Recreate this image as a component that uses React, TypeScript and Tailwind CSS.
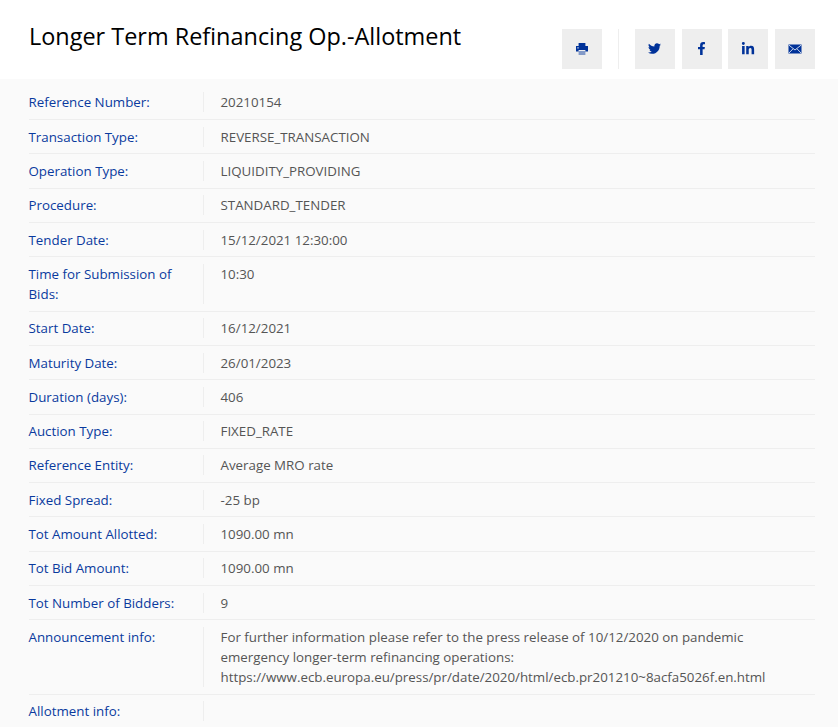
import React from "react";
import { FaTwitter, FaFacebookF, FaLinkedinIn } from "react-icons/fa";

const ROWS: [string, React.ReactNode][] = [
  ["Reference Number:", "20210154"],
  ["Transaction Type:", "REVERSE_TRANSACTION"],
  ["Operation Type:", "LIQUIDITY_PROVIDING"],
  ["Procedure:", "STANDARD_TENDER"],
  ["Tender Date:", "15/12/2021 12:30:00"],
  ["Time for Submission of Bids:", "10:30"],
  ["Start Date:", "16/12/2021"],
  ["Maturity Date:", "26/01/2023"],
  ["Duration (days):", "406"],
  ["Auction Type:", "FIXED_RATE"],
  ["Reference Entity:", "Average MRO rate"],
  ["Fixed Spread:", "-25 bp"],
  ["Tot Amount Allotted:", "1090.00 mn"],
  ["Tot Bid Amount:", "1090.00 mn"],
  ["Tot Number of Bidders:", "9"],
  [
    "Announcement info:",
    <>
      For further information please refer to the press release of 10/12/2020 on pandemic
      <br />
      emergency longer-term refinancing operations:
      <br />
      https://www.ecb.europa.eu/press/pr/date/2020/html/ecb.pr201210~8acfa5026f.en.html
    </>,
  ],
  ["Allotment info:", ""],
];

const IconButton = ({ children }: { children: React.ReactNode }) => (
  <div className="w-10 h-10 bg-[#eeeeee] flex items-center justify-center text-[#003299]">
    {children}
  </div>
);

const PrintIcon = () => (
  <svg width="14" height="14" viewBox="0 0 14 14" fill="currentColor">
    <rect x="3.6" y="1" width="6.8" height="3" />
    <path d="M1 4h12v5.5h-2.6V8H3.6v1.5H1z" />
    <rect x="2.2" y="5.4" width="1.6" height="1" fill="#dfe6f3" />
    <rect x="3.6" y="9" width="6.8" height="4" opacity="0.45" />
  </svg>
);

const MailIcon = () => (
  <svg width="14" height="10" viewBox="0 0 14 10">
    <rect x="0.5" y="0.5" width="13" height="9" fill="currentColor" />
    <path d="M1 1.2 7 6l6-4.8M1 9l4-4.2M13 9 9 4.8" fill="none" stroke="#dfe6f3" strokeWidth="0.9" />
  </svg>
);

const App = () => {
  return (
    <div className="w-[838px] h-[727px] overflow-hidden bg-white font-['Open_Sans',sans-serif] text-[13.33px] leading-[20px] antialiased">
      <div className="h-[79px] flex items-start justify-between pl-[29px] pr-[23px]">
        <h1 className="text-[23.44px] leading-[32px] mt-[20px] text-black">
          Longer Term Refinancing Op.-Allotment
        </h1>
        <div className="flex mt-[29px]">
          <IconButton>
            <PrintIcon />
          </IconButton>
          <div className="w-px h-10 bg-[#eeeeee] mx-4" />
          <div className="flex gap-[6.67px]">
            <IconButton>
              <FaTwitter size={13} className="-mt-px -ml-px" />
            </IconButton>
            <IconButton>
              <FaFacebookF size={13} className="-mt-px" />
            </IconButton>
            <IconButton>
              <FaLinkedinIn size={14} className="-mt-px" />
            </IconButton>
            <IconButton>
              <MailIcon />
            </IconButton>
          </div>
        </div>
      </div>
      <div className="h-[648px] bg-[#fafafa] pl-[28.5px] pr-[23px] pt-[6.7px]">
        {ROWS.map(([label, value], i) => (
          <div
            key={i}
            className="flex py-[6.66px] border-b border-[#eeeeee] last:border-b-0"
          >
            <div className="w-[175.5px] shrink-0 pr-[20px] text-[#0a3a9e] border-r border-[#eeeeee]">
              {label}
            </div>
            <div className="pl-[16.5px] text-[#555555]">{value}</div>
          </div>
        ))}
      </div>
    </div>
  );
};

export default App;
